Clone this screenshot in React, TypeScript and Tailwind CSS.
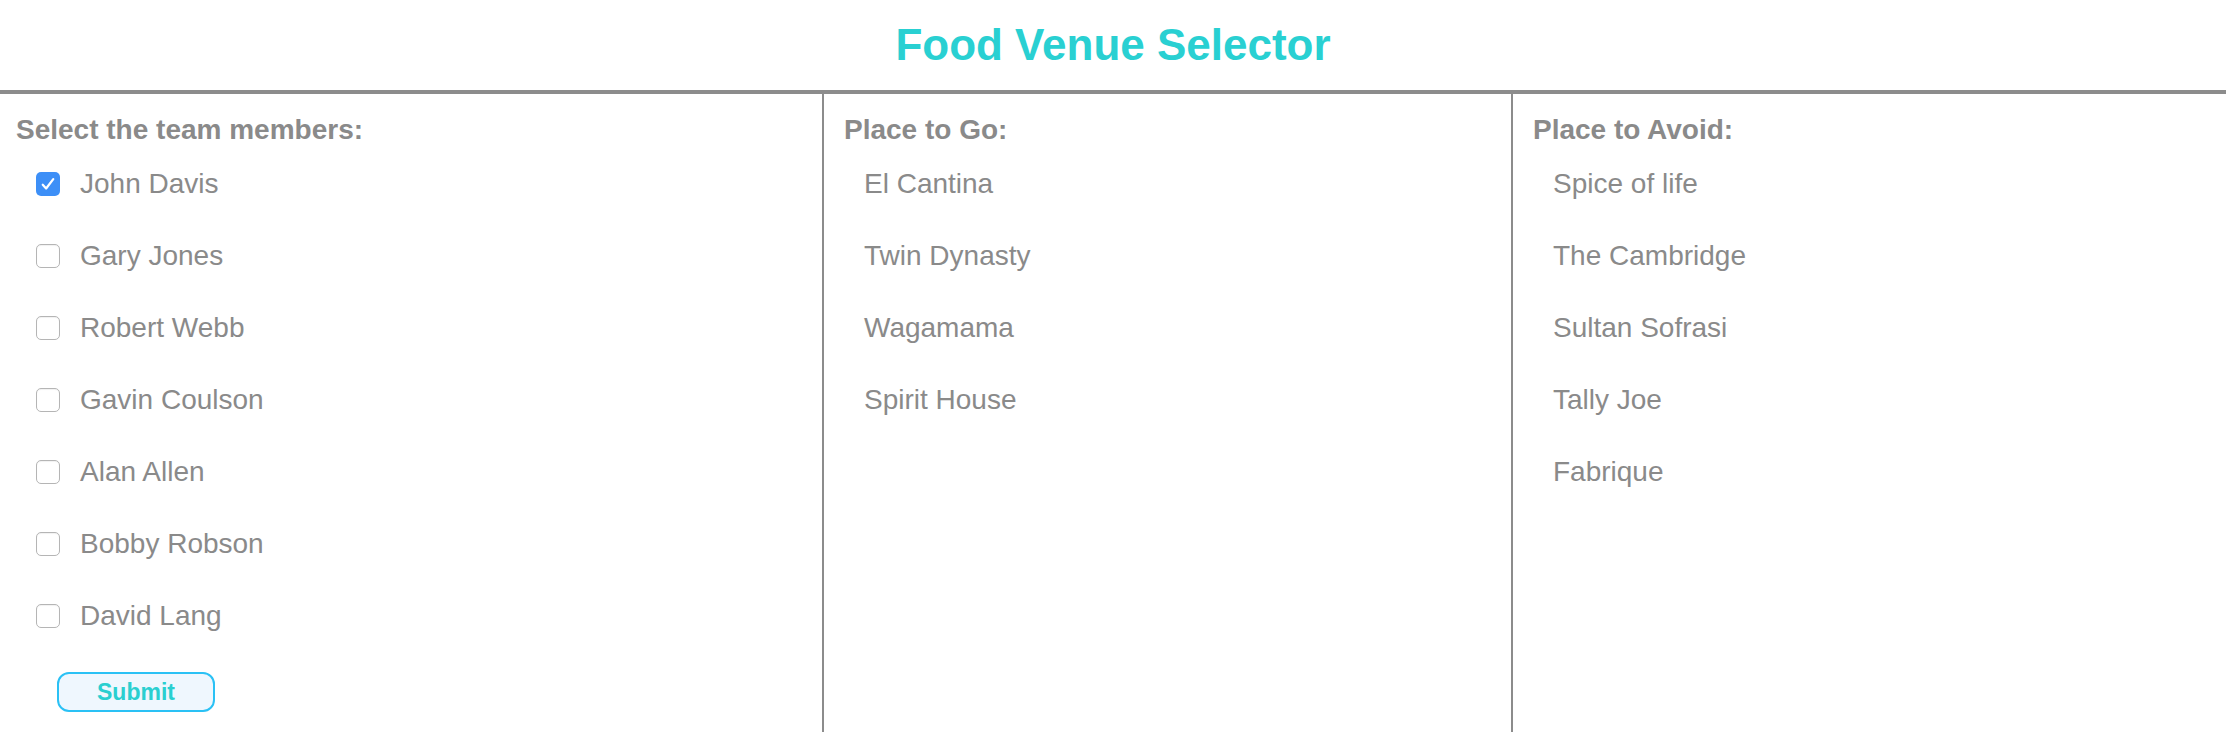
import { useState } from "react";

const members = [
  "John Davis",
  "Gary Jones",
  "Robert Webb",
  "Gavin Coulson",
  "Alan Allen",
  "Bobby Robson",
  "David Lang",
];

const placesToGo = ["El Cantina", "Twin Dynasty", "Wagamama", "Spirit House"];
const placesToAvoid = ["Spice of life", "The Cambridge", "Sultan Sofrasi", "Tally Joe", "Fabrique"];

const Checkbox = ({ checked, onClick }: { checked: boolean; onClick: () => void }) => (
  <button
    type="button"
    onClick={onClick}
    className={
      checked
        ? "w-6 h-6 rounded-[5px] bg-[#3d8ff7] flex items-center justify-center shrink-0"
        : "w-6 h-6 rounded-[5px] border-[1.5px] border-[#b5b5b5] bg-white shadow-[inset_0_1px_1px_rgba(0,0,0,0.06)] shrink-0"
    }
  >
    {checked && (
      <svg viewBox="0 0 24 24" className="w-[18px] h-[18px]" fill="none" stroke="white" strokeWidth={3} strokeLinecap="round" strokeLinejoin="round">
        <path d="M5 13l4.5 5L19 5.5" />
      </svg>
    )}
  </button>
);

const ColumnHeading = ({ children }: { children: string }) => (
  <h2 className="text-[28px] leading-[28px] font-bold text-[#8a8a8a] h-[28px]">{children}</h2>
);

const PlaceList = ({ title, places }: { title: string; places: string[] }) => (
  <section className="border-l-2 border-[#8c8c8c] pt-[22px] pl-5">
    <ColumnHeading>{title}</ColumnHeading>
    <ul className="mt-1 pl-5">
      {places.map((p) => (
        <li key={p} className="h-[72px] flex items-center text-[28px] leading-[28px]">
          {p}
        </li>
      ))}
    </ul>
  </section>
);

export default function App() {
  const [selected, setSelected] = useState<string[]>(["John Davis"]);

  const toggle = (name: string) =>
    setSelected((s) => (s.includes(name) ? s.filter((n) => n !== name) : [...s, name]));

  return (
    <div className="h-screen flex flex-col bg-white text-[#8a8a8a] font-['Liberation_Sans',Helvetica,Arial,sans-serif]">
      <header className="h-[90px] flex items-center justify-center">
        <h1 className="text-[44px] leading-[44px] font-bold text-[#29d0d2]">Food Venue Selector</h1>
      </header>
      <div className="h-1 bg-[#8c8c8c]" />
      <main className="flex-1 grid grid-cols-[822px_689px_1fr]">
        <section className="pt-[22px] pl-4">
          <ColumnHeading>Select the team members:</ColumnHeading>
          <ul className="mt-1 pl-5">
            {members.map((m) => (
              <li key={m} className="h-[72px] flex items-center gap-5">
                <Checkbox checked={selected.includes(m)} onClick={() => toggle(m)} />
                <span className="text-[28px] leading-[28px]">{m}</span>
              </li>
            ))}
          </ul>
          <button
            type="button"
            className="mt-5 ml-[41px] w-[158px] h-10 rounded-xl border-2 border-[#2ac1f5] bg-[#eff7fe] text-[23px] font-bold text-[#2acfd0]"
          >
            Submit
          </button>
        </section>
        <PlaceList title="Place to Go:" places={placesToGo} />
        <PlaceList title="Place to Avoid:" places={placesToAvoid} />
      </main>
    </div>
  );
}
